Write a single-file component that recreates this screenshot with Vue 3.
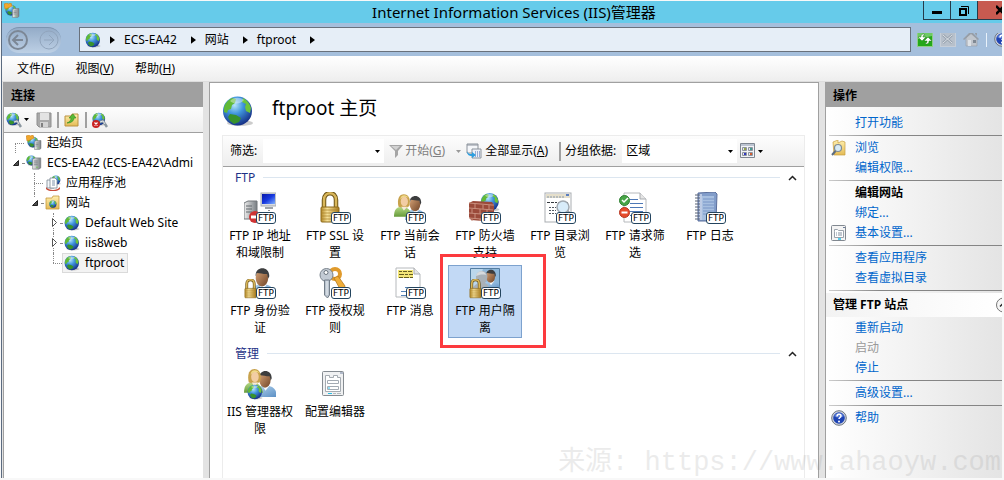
<script setup>
import { ref } from 'vue'

const crumbs = ['ECS-EA42', '网站', 'ftproot']

const menus = [
  { text: '文件', key: 'F' },
  { text: '视图', key: 'V' },
  { text: '帮助', key: 'H' }
]

const tree = [
  { label: '起始页', icon: 'start', level: 0, line: 'down', leaf: true },
  { label: 'ECS-EA42 (ECS-EA42\\Admi', icon: 'server', level: 0, state: 'open' },
  { label: '应用程序池', icon: 'pool', level: 1, line: 'full', leaf: true },
  { label: '网站', icon: 'sites', level: 1, line: 'up', state: 'open' },
  { label: 'Default Web Site', icon: 'globe', level: 2, line: 'full', state: 'closed' },
  { label: 'iis8web', icon: 'globe', level: 2, line: 'full', state: 'closed' },
  { label: 'ftproot', icon: 'globe', level: 2, line: 'up', leaf: true }
]

const groups = [
  {
    title: 'FTP',
    items: [
      { label: 'FTP IP 地址和域限制', icon: 'ip', ftp: true },
      { label: 'FTP SSL 设置', icon: 'lock', ftp: true },
      { label: 'FTP 当前会话', icon: 'users', ftp: true },
      { label: 'FTP 防火墙支持', icon: 'firewall', ftp: true },
      { label: 'FTP 目录浏览', icon: 'browse', ftp: true },
      { label: 'FTP 请求筛选', icon: 'request', ftp: true },
      { label: 'FTP 日志', icon: 'log', ftp: true },
      { label: 'FTP 身份验证', icon: 'auth', ftp: true },
      { label: 'FTP 授权规则', icon: 'keys', ftp: true },
      { label: 'FTP 消息', icon: 'message', ftp: true },
      { label: 'FTP 用户隔离', icon: 'isolation', ftp: true, marked: true }
    ]
  },
  {
    title: '管理',
    items: [
      { label: 'IIS 管理器权限', icon: 'perms' },
      { label: '配置编辑器', icon: 'config' }
    ]
  }
]

const siteActions = [
  [{ label: '打开功能' }],
  [{ label: '浏览', icon: 'explore' }, { label: '编辑权限...' }],
  [{ label: '编辑网站', title: true }, { label: '绑定...' }, { label: '基本设置...', icon: 'settings' }],
  [{ label: '查看应用程序' }, { label: '查看虚拟目录' }]
]

const ftpActions = [
  [{ label: '重新启动' }, { label: '启动', disabled: true }, { label: '停止' }],
  [{ label: '高级设置...' }],
  [{ label: '帮助', icon: 'help' }]
]

const selectedNode = ref('ftproot')
const selectedFeature = ref('FTP 用户隔离')
const filter = ref('')
const groupBy = ref('区域')
</script>

<template>
  <div class="page">
    <svg class="defs" aria-hidden="true">
      <defs>
        <radialGradient id="g-sea" cx=".4" cy=".3" r=".75">
          <stop offset="0" stop-color="#b5e4fa" />
          <stop offset=".4" stop-color="#4095dc" />
          <stop offset="1" stop-color="#12267e" />
        </radialGradient>
        <linearGradient id="g-gold" x1="0" x2="1" y1="0" y2="0">
          <stop offset="0" stop-color="#b58a28" />
          <stop offset=".35" stop-color="#f7e29a" />
          <stop offset="1" stop-color="#a87a1c" />
        </linearGradient>
        <linearGradient id="g-steel" x1="0" x2="1" y1="0" y2="0">
          <stop offset="0" stop-color="#eeeeee" />
          <stop offset="1" stop-color="#777d82" />
        </linearGradient>
        <linearGradient id="g-screen" x1="0" x2="1" y1="0" y2="1">
          <stop offset="0" stop-color="#0717a8" />
          <stop offset=".5" stop-color="#1739df" />
          <stop offset="1" stop-color="#7fb2ff" />
        </linearGradient>
        <linearGradient id="g-blue" x1="0" x2="1" y1="0" y2="1">
          <stop offset="0" stop-color="#b9d8f1" />
          <stop offset="1" stop-color="#5b8fc4" />
        </linearGradient>
        <linearGradient id="g-green" x1="0" x2="0" y1="0" y2="1">
          <stop offset="0" stop-color="#b6da87" />
          <stop offset="1" stop-color="#669b3a" />
        </linearGradient>
        <linearGradient id="g-face" x1="0" x2="1" y1="0" y2="1">
          <stop offset="0" stop-color="#d9a578" />
          <stop offset="1" stop-color="#704528" />
        </linearGradient>
        <linearGradient id="g-folder" x1="0" x2="0" y1="0" y2="1">
          <stop offset="0" stop-color="#fff0b0" />
          <stop offset="1" stop-color="#e4bb55" />
        </linearGradient>
      </defs>

      <symbol id="i-globe" viewBox="0 0 32 32">
        <ellipse cx="18" cy="28" rx="13" ry="3" fill="#000" opacity=".2" />
        <circle cx="15.500" cy="16" r="14.500" fill="url(#g-sea)" />
        <path d="M2 13c1-5 4-8 8-10l4 1-1 4-3 2-1 4-3 1-1 3-3-1z" fill="#61b936" />
        <path d="M21 3c4 2 7 6 8 10l-1 5-4-2-1-4 1-3-4-2z" fill="#6cc43a" />
        <path d="M8 19l6 1 5 3-2 4-5 2-4-3-2-4z" fill="#38922c" />
        <path d="M8 6c4-4 10-4 14-1-3 4-9 5-14 1z" fill="#fff" opacity=".4" />
      </symbol>
      <symbol id="i-tower" viewBox="0 0 16 20">
        <path d="M1 3l4-2h9v16l-3 2H1z" fill="url(#g-steel)" stroke="#72777b" />
        <path d="M3 6h6M3 9h6M3 12h6" stroke="#62686d" />
        <rect x="7" y="15" width="2" height="2" fill="#64c247" />
      </symbol>
      <symbol id="i-server" viewBox="0 0 16 16">
        <use href="#i-globe" x="0" y="0" width="11" height="11" />
        <use href="#i-tower" x="6" y="1" width="10" height="15" />
      </symbol>
      <symbol id="i-start" viewBox="0 0 16 16">
        <use href="#i-globe" x="1" y="1" width="12" height="12" />
        <path d="M0 1l3-1 1 1 3-1 1 3-4 2-3 1z" fill="#f0a72d" stroke="#c97b13" stroke-width=".5" />
        <use href="#i-tower" x="8" y="4" width="8" height="12" />
      </symbol>
      <symbol id="i-pool" viewBox="0 0 16 16">
        <use href="#i-globe" x="6" y="0" width="10" height="10" />
        <path d="M1 12c3 4 11 4 14 0v2c-3 3-11 3-14 0z" fill="#c94a38" />
        <path d="M2 5h7v8H2z" fill="#f5f8fb" stroke="#7a8793" stroke-width=".8" />
        <path d="M5 3h5l2 2v8H5z" fill="#fff" stroke="#7a8793" stroke-width=".8" />
        <path d="M7 6h3M7 8h3M7 10h3" stroke="#7e92a8" />
      </symbol>
      <symbol id="i-sites" viewBox="0 0 16 16">
        <path d="M1 3h6l1-2h6v13H1z" fill="url(#g-folder)" stroke="#c69b3e" stroke-width=".8" />
        <use href="#i-globe" x="4" y="5" width="8" height="8" />
      </symbol>
      <symbol id="i-connect" viewBox="0 0 16 16">
        <use href="#i-globe" x="0" y="0" width="14" height="14" />
        <path d="M8 10l3-1 2 3 2 3" fill="none" stroke="#8a969f" stroke-width="2.500" />
        <path d="M8 10l3-1 2 3" fill="none" stroke="#dce3e8" />
      </symbol>
      <symbol id="i-disconnect" viewBox="0 0 16 16">
        <use href="#i-connect" width="16" height="16" />
        <circle cx="4" cy="12" r="4" fill="#c92222" />
        <path d="M2.500 10.500l3 3m0-3l-3 3" stroke="#fff" stroke-width="1.200" />
      </symbol>
      <symbol id="i-save" viewBox="0 0 16 16">
        <path d="M1 1h14v14H3l-2-2z" fill="#a9a9a9" stroke="#8f8f8f" />
        <rect x="4" y="1" width="9" height="7" fill="#e3e3e3" />
        <rect x="4" y="10" width="8" height="5" fill="#d3d3d3" />
        <rect x="5" y="11" width="2" height="4" fill="#808080" />
      </symbol>
      <symbol id="i-up" viewBox="0 0 16 16">
        <path d="M1 4h6l1-2h6v12H1z" fill="url(#g-folder)" stroke="#bb9240" />
        <path d="M3 11c3-1 4-3 4-5H5l4-4 3 4h-2c0 3-3 5-7 5z" fill="#58b935" stroke="#2d8a20" stroke-width=".6" />
      </symbol>
      <symbol id="i-funnel" viewBox="0 0 16 16">
        <path d="M1 2h14l-5 6v4l-3 3V8z" fill="#a5a5a5" />
        <path d="M3 3h9L8 7z" fill="#d2d2d2" />
      </symbol>
      <symbol id="i-showall" viewBox="0 0 16 16">
        <path d="M1 1h11v9H1z" fill="#f5f7fa" stroke="#8b929b" />
        <path d="M1 2h11" stroke="#8b929b" />
        <path d="M6 6h9v9H6z" fill="#edf1f8" stroke="#8b929b" />
        <path d="M9 9h5M9 11h5M9 13h5" stroke="#4a67ad" stroke-dasharray="1 1" />
        <path d="M1 8c1 3 3 3 5 3V9l4 3-4 3v-2c-3 0-5-1-5-5z" fill="#2d9fe0" />
      </symbol>
      <symbol id="i-view" viewBox="0 0 16 16">
        <path d="M.5.5h14v14H.5z" fill="#f2f4f8" stroke="#7f8691" />
        <path d="M1 2h13" stroke="#8794ab" />
        <path d="M2.500 4.500h4v3h-4zM8.500 4.500h4v3h-4zM2.500 9.500h4v3h-4zM8.500 9.500h4v3h-4z" fill="#e4e7ec" stroke="#8d939c" />
        <path d="M4 5h2v2H4z" fill="#93a24b" /><path d="M10 5h2v2h-2z" fill="#45998f" />
        <path d="M4 10h2v2H4z" fill="#3038c0" /><path d="M10 10h2v2h-2z" fill="#d05e34" />
      </symbol>
      <symbol id="i-refresh" viewBox="0 0 16 16">
        <rect x=".5" y=".5" width="15" height="15" fill="#24a81a" stroke="#8fce85" />
        <path d="M1 1h14v4L1 8z" fill="#8fd886" opacity=".7" />
        <path d="M7 3C4 3 4 5 4 6H1l4 4 4-4H6c0-1 0-2 2-2zM9 13c3 0 3-2 3-3h3l-4-4-4 4h3c0 1 0 2-2 2z" fill="#fff" stroke="#247a1c" stroke-width=".5" />
      </symbol>
      <symbol id="i-stop" viewBox="0 0 16 16">
        <rect x=".5" y=".5" width="15" height="15" fill="#b7c0cb" stroke="#c6ced8" />
        <path d="M3 4l9 8M12 4l-9 8" stroke="#98a3b0" stroke-width="2.500" />
        <path d="M3 4l9 8M12 4l-9 8" stroke="#dce1e6" />
      </symbol>
      <symbol id="i-home" viewBox="0 0 16 16">
        <path d="M3 7v8h11V7L8 2z" fill="#c0c5cc" stroke="#939ba5" stroke-width=".6" />
        <path d="M0 8l8-8 8 8-1 1-7-6-7 6z" fill="#979ea7" />
        <path d="M12 1h2v4l-2-2z" fill="#979ea7" />
        <rect x="5" y="9" width="3" height="6" fill="#dde1e6" /><rect x="10" y="9" width="3" height="3" fill="#808994" />
      </symbol>
      <symbol id="i-help" viewBox="0 0 16 16">
        <circle cx="8" cy="8" r="7.300" fill="#d5d8de" stroke="#6c7480" />
        <circle cx="8" cy="8" r="5.800" fill="#1f44b4" />
        <path d="M3 6c2-4 8-4 10 0-3 2-7 2-10 0z" fill="#7e9fea" opacity=".6" />
        <path d="M6 6.500c0-3 4-3 4-.5 0 1.500-2 1.500-2 3" fill="none" stroke="#fff" stroke-width="1.500" />
        <circle cx="8" cy="11.500" r="1" fill="#fff" />
      </symbol>
      <symbol id="i-explore" viewBox="0 0 16 16">
        <path d="M2 2l5-2v3l4-2 3 1v13H3z" fill="url(#g-folder)" stroke="#c79e40" stroke-width=".7" />
        <circle cx="7" cy="8" r="3.500" fill="#d7ebf7" stroke="#7f8b96" stroke-width="1.200" />
        <path d="M4.500 11L1 15" stroke="#5b6c82" stroke-width="2" />
      </symbol>
      <symbol id="i-settings" viewBox="0 0 16 16">
        <rect x=".5" y=".5" width="14" height="15" rx="1" fill="#f4f4f4" stroke="#818890" />
        <path d="M12 2.500h2" stroke="#6f7d9a" />
        <path d="M3.500 6.500v-2h3l1 1h5v7h-9z" fill="#fff" stroke="#9aa2ab" />
        <path d="M5 8h1m1 0h4M5 10h1m1 0h4" stroke="#8390a0" />
        <path d="M7 14h3" stroke="#20bfe8" stroke-width="1.500" />
      </symbol>

      <symbol id="i-padlock" viewBox="0 0 20 32">
        <path d="M4 17V8c0-9 12-9 12 0v9" fill="none" stroke="#6d5417" stroke-width="4.500" />
        <path d="M4 17V8c0-9 12-9 12 0v9" fill="none" stroke="#d9b75b" stroke-width="2.500" />
        <rect x="1" y="15" width="18" height="15" rx="1" fill="url(#g-gold)" stroke="#8d6a1b" />
        <path d="M2 18h16M2 21h16M2 24h16M2 27h16" stroke="#a77f27" opacity=".7" />
      </symbol>
      <symbol id="i-woman" viewBox="0 0 20 26">
        <path d="M0 26c0-8 3-11 9-11s10 4 11 11z" fill="url(#g-green)" />
        <path d="M5 15C3 6 6 1 11 1s8 5 6 13l-4 3z" fill="#c8a24c" />
        <ellipse cx="11.500" cy="9" rx="4" ry="5.500" fill="#f2cda4" />
        <path d="M8 15l3 4 4-4z" fill="#f6e9db" />
        <path d="M7 7c2-3 5-4 9-2-2-4-9-4-9 2z" fill="#f0da8b" />
      </symbol>
      <symbol id="i-man" viewBox="0 0 22 26">
        <path d="M0 26c0-8 4-11 11-11s11 4 11 11z" fill="url(#g-blue)" />
        <path d="M8 15l3 5 4-5z" fill="#f7fafc" />
        <ellipse cx="10.500" cy="9.500" rx="5.500" ry="7.500" fill="url(#g-face)" />
        <path d="M5 8c-1-9 12-10 12 0l-1 2-1-4c-4 0-6-1-9-1z" fill="#3c3d3e" />
      </symbol>

      <symbol id="i-ip" viewBox="0 0 32 32">
        <use href="#i-tower" x="-1" y="7" width="16" height="22" />
        <rect x="17" y="1" width="15" height="13" fill="#d9dce0" stroke="#a6abb1" />
        <rect x="18" y="2" width="13" height="10" fill="url(#g-screen)" />
        <path d="M21 16h8" stroke="#9da3a9" stroke-width="2" />
        <path d="M25 18v4" stroke="#222" stroke-dasharray="1 1" />
        <circle cx="11" cy="25" r="6" fill="#cf3434" /><path d="M7 25h8" stroke="#fff" stroke-width="3" />
      </symbol>
      <symbol id="i-lock" viewBox="0 0 32 32">
        <use href="#i-padlock" x="1" y="0" width="20" height="32" />
      </symbol>
      <symbol id="i-users" viewBox="0 0 32 32">
        <use href="#i-man" x="11" y="3" width="21" height="25" />
        <use href="#i-woman" x="0" y="1" width="18" height="24" />
      </symbol>
      <symbol id="i-firewall" viewBox="0 0 32 32">
        <use href="#i-globe" x="11" y="0" width="20" height="20" />
        <path d="M0 11l4-2 19 1 2 3v17l-23-2-2-3z" fill="#9b4a3a" />
        <path d="M0 11l23 2h2M0 16l24 2M0 21l24 2M0 26l24 2" stroke="#c98f7e" fill="none" />
        <path d="M6 12v4m8-3v4m6-4v5M3 17v4m8-4v5m7-4v5M6 22v4m8-4v5M3 27v2m8-2v2" stroke="#c98f7e" />
      </symbol>
      <symbol id="i-browse" viewBox="0 0 32 32">
        <rect x="1" y="1" width="26" height="29" fill="#fff" stroke="#a9adb1" />
        <rect x="2" y="2" width="24" height="4" fill="#e5dfcb" />
        <path d="M3 5h17" stroke="#8798ad" stroke-dasharray="2 1" />
        <rect x="22" y="2" width="3" height="2" fill="#5b7ec0" />
        <path d="M3 10.500h10M14 10.500h10" stroke="#33383d" stroke-dasharray="3 1" />
        <path d="M5 15.500h7M5 18.500h7M5 21.500h7" stroke="#535c65" stroke-dasharray="2 1" />
        <path d="M23 19l5 5" stroke="#9ba2a9" stroke-width="3" />
        <circle cx="19" cy="15" r="6" fill="#d8ecfa" stroke="#a1a9b1" stroke-width="1.500" />
      </symbol>
      <symbol id="i-request" viewBox="0 0 32 32">
        <path d="M5 1h16l6 6v23H5z" fill="#fff" stroke="#b6b9bc" />
        <path d="M21 1v6h6" fill="#e5e5e5" stroke="#a9acb0" />
        <path d="M11 7.500h8M11 11.500h13M11 15.500h13M11 19.500h13M11 23.500h10" stroke="#4e78b6" />
        <circle cx="5.500" cy="8.500" r="5" fill="#47a547" stroke="#2e7f31" /><path d="M3 8l2 2 4-4" fill="none" stroke="#fff" stroke-width="1.500" />
        <circle cx="5.500" cy="20.500" r="5" fill="#e64b2b" stroke="#b43520" /><path d="M2.500 20.500h6" stroke="#fff" stroke-width="2" />
      </symbol>
      <symbol id="i-log" viewBox="0 0 32 32">
        <path d="M4 1l17-1 2 2-1 27H4z" fill="#829dca" stroke="#5b6f9c" />
        <path d="M5 2h3v26H5z" fill="#bdcbe5" /><path d="M8 4h12v24H8z" fill="#a7bfe0" />
        <path d="M9 7h11M9 10h11M9 13h11M9 16h11M9 19h11M9 22h11" stroke="#7895c6" />
        <path d="M1 3h5M1 6h5M1 9h5M1 12h5M1 15h5M1 18h5M1 21h5M1 24h5M1 27h5" stroke="#596375" />
      </symbol>
      <symbol id="i-auth" viewBox="0 0 32 32">
        <use href="#i-man" x="6" y="0" width="25" height="30" />
        <use href="#i-padlock" x="0" y="12" width="13" height="20" />
      </symbol>
      <symbol id="i-keys" viewBox="0 0 32 32">
        <circle cx="16" cy="7" r="5" fill="none" stroke="#e09a2b" stroke-width="4" />
        <path d="M15 11l4-2 7 10-1 4-4-1z" fill="#f0ae3a" stroke="#b6781d" stroke-width=".8" />
        <circle cx="7.500" cy="8" r="6.500" fill="#c3cbd4" stroke="#7a838d" /><circle cx="7" cy="5.500" r="2" fill="#fff" stroke="#6b747e" />
        <path d="M5.500 13h5v15l-2 3-3-3z" fill="#b9c3ce" stroke="#727d88" /><path d="M8 14v14" stroke="#edf2f6" />
      </symbol>
      <symbol id="i-message" viewBox="0 0 32 32">
        <path d="M2 1h18l6 6v23H2z" fill="#fff" stroke="#b6b9bc" />
        <path d="M20 1v6h6" fill="#e5e5e5" stroke="#a9acb0" />
        <path d="M4 3h15v8H4z" fill="#f4e677" />
        <path d="M5 4.500h3m1 0h4m1 0h4M5 7.500h5m1 0h3m1 0h4M5 10.500h4m1 0h5m1 0h3" stroke="#665e21" />
        <path d="M11 20.500h6M7 24.500h7M7 28.500h6" stroke="#5483b7" />
      </symbol>
      <symbol id="i-isolation" viewBox="0 0 32 32">
        <path d="M1.500 1.500h29v22h-29z" fill="#8db7da" stroke="#547da0" />
        <path d="M2 2h12L6 23H2z" fill="#cfe4f4" opacity=".7" />
        <use href="#i-man" x="13" y="2" width="18" height="21" />
        <path d="M4 23c0-5 3-5 5-7-5-7 0-13 5-12 6 1 5 8 2 12 3 1 4 3 4 7z" fill="#a9b1b8" />
        <path d="M7 9c1-6 9-6 10-1-4-1-7 0-10 1z" fill="#d6dade" />
        <use href="#i-padlock" x="0" y="12" width="13" height="20" />
      </symbol>
      <symbol id="i-perms" viewBox="0 0 32 32">
        <use href="#i-man" x="10" y="2" width="23" height="27" />
        <use href="#i-woman" x="0" y="0" width="19" height="25" />
        <use href="#i-globe" x="3" y="16" width="16" height="16" />
      </symbol>
      <symbol id="i-config" viewBox="0 0 32 32">
        <rect x="3.500" y="3.500" width="21" height="24" rx="1" fill="#f0f1f2" stroke="#858b91" />
        <path d="M21 5h3" stroke="#7181a1" />
        <path d="M6.500 23.500v-16h4v2h4v-2h4v2h3v14z" fill="#fff" stroke="#a5abb1" />
        <path d="M8.500 12.500h11v3h-11zM8.500 18.500h11v3h-11z" fill="#fff" stroke="#a4abb3" />
        <path d="M9 20h2M9 25.500h4" stroke="#27bde5" /><path d="M14 25.500h3m1 0h4" stroke="#b4b9be" />
      </symbol>
      <symbol id="i-arrow" viewBox="0 0 5 3"><path d="M0 0h5L2.500 3z" /></symbol>
    </svg>

    <div class="window">
      <header class="titlebar">
        <svg class="ico"><use href="#i-start" /></svg>
        <span class="title">Internet Information Services (IIS)管理器</span>
        <div class="sysbuttons">
          <button class="min" aria-label="最小化"><svg width="10" height="10"><path d="M0 6h10v3H0z" /></svg></button>
          <button class="max" aria-label="还原"><svg width="11" height="11"><path d="M1 4h6v6H1z" fill="none" stroke="#000" stroke-width="2" /><path d="M2 1.500h7.500V9" fill="none" stroke="#000" /></svg></button>
          <button class="close" aria-label="关闭"><svg width="6" height="10"><path d="M0 1l8 8M8 1L0 9" stroke="#000" stroke-width="2.500" /></svg></button>
        </div>
      </header>

      <nav class="navbar">
        <div class="history">
          <button aria-label="后退"><svg viewBox="0 0 20 20"><circle cx="10" cy="10" r="9" /><path d="M15 10H6m4-5l-5 5 5 5" /></svg></button>
          <button aria-label="前进" disabled><svg viewBox="0 0 20 20"><circle cx="10" cy="10" r="9" /><path d="M5 10h9m-4-5l5 5-5 5" /></svg></button>
        </div>
        <div class="address">
          <svg class="ico"><use href="#i-globe" /></svg>
          <svg class="chev" viewBox="0 0 4 6"><path d="M0 0v6l4-3z" /></svg>
          <template v-for="crumb in crumbs" :key="crumb">
            <a href="#">{{ crumb }}</a>
            <svg class="chev" viewBox="0 0 4 6"><path d="M0 0v6l4-3z" /></svg>
          </template>
        </div>
        <div class="navtools">
          <button aria-label="刷新"><svg class="ico"><use href="#i-refresh" /></svg></button>
          <button aria-label="停止"><svg class="ico"><use href="#i-stop" /></svg></button>
          <button aria-label="主页"><svg class="ico"><use href="#i-home" /></svg></button>
          <i class="divider"></i>
          <button class="nav-help" aria-label="帮助"><svg class="ico"><use href="#i-help" /></svg></button>
        </div>
      </nav>

      <div class="menubar">
        <button v-for="menu in menus" :key="menu.key">{{ menu.text }}(<u>{{ menu.key }}</u>)</button>
      </div>

      <div class="panes">
        <aside class="connections">
          <h2>连接</h2>
          <div class="toolbar">
            <button class="drop" aria-label="连接"><svg class="ico"><use href="#i-connect" /></svg><svg class="arrow"><use href="#i-arrow" /></svg></button>
            <button aria-label="保存" disabled><svg class="ico"><use href="#i-save" /></svg></button>
            <i class="sep"></i>
            <button aria-label="向上"><svg class="ico"><use href="#i-up" /></svg></button>
            <i class="sep"></i>
            <button aria-label="断开"><svg class="ico"><use href="#i-disconnect" /></svg></button>
          </div>
          <ul class="tree">
            <li v-for="node in tree" :key="node.label" :class="'level-' + node.level">
              <span class="slot" :class="[node.line, { leaf: node.leaf }]">
                <svg v-if="node.state === 'open'" viewBox="0 0 8 9"><path d="M6.500 2.500v5h-5z" fill="#505050" stroke="#222" /></svg>
                <svg v-if="node.state === 'closed'" viewBox="0 0 8 9"><path d="M2.500.5v8l4-4z" fill="#fff" stroke="#555" /></svg>
              </span>
              <button class="node" :class="{ selected: selectedNode === node.label }" @click="selectedNode = node.label">
                <svg class="ico"><use :href="'#i-' + node.icon" /></svg>{{ node.label }}
              </button>
            </li>
          </ul>
        </aside>

        <main class="content">
          <div class="heading">
            <svg><use href="#i-globe" /></svg>
            <h1>ftproot 主页</h1>
          </div>
          <div class="features">
            <div class="filterbar">
              <label for="filter">筛选:</label>
              <div class="combo filter">
                <input id="filter" v-model="filter" type="text">
                <svg class="arrow"><use href="#i-arrow" /></svg>
              </div>
              <button class="go" disabled><svg class="ico"><use href="#i-funnel" /></svg><span>开始(<u>G</u>)</span><svg class="arrow"><use href="#i-arrow" /></svg></button>
              <button class="all"><svg class="ico"><use href="#i-showall" /></svg><span>全部显示(<u>A</u>)</span></button>
              <i class="sep"></i>
              <label for="group">分组依据:</label>
              <div class="combo group-by">
                <select id="group" v-model="groupBy">
                  <option>区域</option>
                  <option>类别</option>
                </select>
                <svg class="arrow"><use href="#i-arrow" /></svg>
              </div>
              <button class="view" aria-label="视图"><svg class="ico"><use href="#i-view" /></svg><svg class="arrow"><use href="#i-arrow" /></svg></button>
            </div>

            <section v-for="group in groups" :key="group.title" class="group">
              <h3>
                <span>{{ group.title }}</span>
                <button aria-label="折叠"><svg viewBox="0 0 9 6"><path d="M1 5l3.500-3.500L8 5" fill="none" stroke="#222" stroke-width="1.500" /></svg></button>
              </h3>
              <div class="items">
                <button
                  v-for="item in group.items"
                  :key="item.label"
                  class="item"
                  :class="{ selected: selectedFeature === item.label, marked: item.marked }"
                  @click="selectedFeature = item.label"
                >
                  <span class="picture">
                    <svg><use :href="'#i-' + item.icon" /></svg>
                    <b v-if="item.ftp">FTP</b>
                  </span>
                  <span class="name">{{ item.label }}</span>
                </button>
              </div>
            </section>
          </div>
        </main>

        <aside class="actions">
          <h2>操作</h2>
          <div class="links first">
            <ul v-for="(block, i) in siteActions" :key="i">
              <li v-for="action in block" :key="action.label">
                <svg v-if="action.icon" class="ico"><use :href="'#i-' + action.icon" /></svg>
                <strong v-if="action.title">{{ action.label }}</strong>
                <a v-else href="#">{{ action.label }}</a>
              </li>
            </ul>
          </div>
          <div class="subhead">
            管理 FTP 站点
            <button aria-label="折叠"><svg width="6" height="16"><circle cx="7.500" cy="8" r="7" fill="#f6f6f6" stroke="#777" /><path d="M4 9.500l3-3" stroke="#222" stroke-width="1.500" /></svg></button>
          </div>
          <div class="links">
            <ul v-for="(block, i) in ftpActions" :key="i">
              <li v-for="action in block" :key="action.label">
                <svg v-if="action.icon" class="ico"><use :href="'#i-' + action.icon" /></svg>
                <span v-if="action.disabled">{{ action.label }}</span>
                <a v-else href="#">{{ action.label }}</a>
              </li>
            </ul>
          </div>
        </aside>
      </div>
    </div>
    <div class="watermark">来源: https://www.ahaoyw.com</div>
  </div>
</template>

<style>
body {
  background: #f8f8f8;
}
</style>

<style scoped>
* {
  box-sizing: border-box;
  margin: 0;
}

.page {
  position: relative;
  display: flex;
  min-height: 100vh;
  padding: 1px 2px 2px 1px;
  overflow: hidden;
  font: 12px/20px "Noto Sans", "Noto Sans CJK SC", sans-serif;
  color: #000;
}

.defs {
  position: absolute;
  width: 0;
  height: 0;
}

button {
  display: flex;
  align-items: center;
  padding: 0;
  border: 0;
  background: none;
  color: inherit;
  font: inherit;
}

ul {
  padding: 0;
  list-style: none;
}

a {
  color: inherit;
  text-decoration: none;
}

svg {
  flex: none;
}

.ico {
  width: 16px;
  height: 16px;
}

.arrow {
  width: 5px;
  height: 3px;
}

.window {
  display: flex;
  flex: 1;
  flex-direction: column;
  min-width: 0;
  border-left: 1px solid #5b6b80;
}

.titlebar {
  display: grid;
  grid-template-columns: 101px 1fr 79px;
  height: 22px;
  padding-left: 2px;
  background: #66cbea;
}

.titlebar .ico {
  margin-top: 2px;
}

.title {
  font-size: 15px;
  line-height: 22px;
  text-align: center;
  white-space: nowrap;
}

.sysbuttons {
  display: flex;
}

.sysbuttons button {
  justify-content: center;
  width: 27px;
  height: 19px;
  border: 1px solid #253b4a;
  border-top: 0;
  border-right: 0;
}

.sysbuttons .close {
  justify-content: flex-end;
  width: 25px;
  background: #c75a50;
}

.navbar {
  display: flex;
  align-items: center;
  height: 33px;
  padding-left: 4px;
  background: #a5bfdc;
}

.history {
  display: flex;
  justify-content: space-between;
  width: 55px;
  height: 26px;
  padding: 3px 2px;
  border-radius: 13px;
  border-top: 1px solid #7c94af;
  background: linear-gradient(#94acc8, #bdd0e5);
}

.history svg {
  width: 20px;
  height: 20px;
  fill: none;
  stroke: #7c8795;
  stroke-width: 2;
}

.history button:disabled svg {
  stroke: #91a5bd;
  stroke-width: 1;
}

.address {
  display: flex;
  flex: 1;
  align-items: center;
  gap: 9px;
  height: 25px;
  margin-left: 18px;
  padding-left: 5px;
  border: 1px solid #69717c;
  background: #e6eef7;
}

.address a {
  margin-right: 5px;
}

.chev {
  width: 5px;
  height: 8px;
}

.navtools {
  display: flex;
  align-items: center;
  gap: 7px;
  width: 91px;
  padding-left: 6px;
  overflow: hidden;
}

.navtools button {
  margin-top: -2px;
}

.navtools .divider {
  flex: none;
  width: 1px;
  height: 14px;
  background: #e8f1fa;
}

.nav-help {
  width: 8px;
}

.menubar {
  display: flex;
  gap: 21px;
  height: 26px;
  padding-left: 15px;
  border-bottom: 1px solid #ddd;
  background: linear-gradient(#fff, #eee);
}

.panes {
  display: flex;
  flex: 1;
  gap: 6px;
  padding-left: 1px;
  background: #e3e3e3;
}

h2 {
  height: 25px;
  padding-left: 7px;
  background: #a0a0a0;
  font-size: 12px;
  line-height: 27px;
}

.connections {
  flex: none;
  width: 200px;
  overflow: hidden;
  border-left: 1px solid #a0a0a0;
  background: #fff;
}

.toolbar {
  display: flex;
  align-items: center;
  gap: 5px;
  height: 26px;
  padding-left: 2px;
  border-bottom: 1px solid #a0a0a0;
  background: linear-gradient(#fdfdfd, #eee);
}

.toolbar .drop {
  gap: 2px;
  width: 25px;
}

.sep {
  flex: none;
  width: 2px;
  height: 16px;
  background: #a0a0a0;
}

.tree li {
  display: flex;
  height: 20px;
  padding-left: 8px;
}

.tree .level-1 {
  padding-left: 27px;
}

.tree .level-2 {
  padding-left: 46px;
}

.slot {
  position: relative;
  flex: none;
  width: 12px;
}

.slot svg {
  position: absolute;
  top: 5px;
  left: 0;
  width: 8px;
  height: 9px;
  background: #fff;
}

.slot::before {
  position: absolute;
  top: 10px;
  right: 0;
  left: 10px;
  border-top: 1px dotted #888;
  content: "";
}

.slot.leaf::before {
  left: 3px;
}

.slot.down::after,
.slot.full::after,
.slot.up::after {
  position: absolute;
  top: 0;
  bottom: 0;
  left: 3px;
  z-index: -1;
  border-left: 1px dotted #888;
  content: "";
}

.slot.down::after {
  top: 10px;
}

.slot.up::after {
  bottom: 10px;
}

.connections,
.slot {
  z-index: 0;
}

.node {
  gap: 5px;
  padding: 0 3px 0 1px;
  border: 1px solid transparent;
  white-space: nowrap;
}

.node.selected {
  border-color: #dadada;
  background: #f3f3f3;
}

.content {
  display: flex;
  flex: 1;
  flex-direction: column;
  min-width: 0;
  padding: 0 13px 0 12px;
  border: 1px solid #a0a0a0;
  border-bottom: 0;
  background: #fff;
}

.heading {
  display: flex;
  gap: 18px;
  height: 52px;
  padding-top: 12px;
}

.heading svg {
  width: 32px;
  height: 32px;
}

h1 {
  font-size: 19px;
  font-weight: 400;
  line-height: 26px;
}

.features {
  flex: 1;
  border: 1px solid #ececec;
  border-bottom: 0;
}

.filterbar {
  display: flex;
  align-items: center;
  height: 31px;
  padding-left: 7px;
  border-bottom: 1px solid #a0a0a0;
  background: linear-gradient(#fdfdfd, #eee);
  white-space: nowrap;
}

.combo {
  display: flex;
  align-items: center;
  height: 24px;
  padding-right: 4px;
  background: #fff;
}

.combo.filter {
  width: 121px;
  margin-left: 6px;
}

.combo.group-by {
  width: 115px;
  margin-left: 6px;
}

.combo input,
.combo select {
  flex: 1;
  min-width: 0;
  height: 22px;
  padding: 0 4px;
  border: 0;
  outline: 0;
  background: transparent;
  font: inherit;
  appearance: none;
}

.go {
  gap: 1px;
  margin-left: 4px;
  color: #808080;
}

.go .arrow {
  margin-left: 10px;
  fill: #999;
}

.all {
  margin-left: 5px;
}

.all .ico {
  margin-right: 3px;
}

.filterbar .sep {
  height: 19px;
  margin: 0 4px 0 11px;
}

.view {
  gap: 2px;
  margin-left: 3px;
}

.group {
  padding: 1px 0 6px;
}

.group + .group {
  padding-top: 0;
}

h3 {
  display: flex;
  align-items: center;
  gap: 8px;
  height: 19px;
  margin-bottom: 3px;
  padding: 0 7px 0 12px;
  color: #1e3287;
  font-size: 12px;
  font-weight: 400;
}

h3::after {
  flex: 1;
  order: 1;
  height: 1px;
  background: #dce6f0;
  content: "";
}

h3 button {
  order: 2;
}

h3 svg {
  width: 9px;
  height: 6px;
}

.items {
  display: flex;
  flex-wrap: wrap;
  gap: 2px 1px;
}

.item {
  position: relative;
  flex-direction: column;
  gap: 3px;
  width: 74px;
  height: 73px;
  padding-top: 1px;
  border: 1px solid transparent;
  line-height: 17px;
}

.item.selected {
  border-color: #7da2ce;
  background: #c2d9f5;
}

.item.marked::after {
  position: absolute;
  top: -12px;
  right: -25px;
  bottom: -11px;
  left: -9px;
  border: 3px solid #fc3a3e;
  content: "";
  pointer-events: none;
}

.picture {
  position: relative;
  width: 32px;
  height: 32px;
}

.picture svg {
  display: block;
  width: 32px;
  height: 32px;
}

.picture b {
  position: absolute;
  right: 0;
  bottom: 0;
  width: 20px;
  height: 12px;
  border: 1px solid #23445e;
  border-radius: 3px;
  background: #fff;
  font: 9px/10px "DejaVu Sans", sans-serif;
}

.name {
  width: 68px;
}

.actions {
  flex: none;
  width: 177px;
  border-left: 1px solid #a0a0a0;
  background: linear-gradient(90deg, #fff, #e4e4e4);
}

.links.first {
  padding-top: 6px;
}

.links ul + ul::before,
.links.first ul:last-child::after {
  display: block;
  height: 1px;
  margin: 2px 0 2px 3px;
  background: linear-gradient(90deg, #ccc, #858585 30%);
  content: "";
}

.links li {
  display: flex;
  align-items: center;
  gap: 8px;
  height: 20px;
  padding-left: 5px;
  color: #999;
}

.links li > :first-child:not(svg) {
  margin-left: 24px;
}

.links a {
  color: #0066cc;
}

.links strong {
  color: #000;
}

.subhead {
  display: flex;
  align-items: center;
  justify-content: space-between;
  height: 24px;
  margin-bottom: 1px;
  padding-left: 7px;
  background: linear-gradient(90deg, #f3f3f3, #fff);
  font-weight: 700;
}

.watermark {
  position: absolute;
  right: 3px;
  bottom: 0;
  color: #808080;
  font: 27px/34px "Liberation Mono", "Noto Sans CJK SC", monospace;
  opacity: .15;
  pointer-events: none;
  white-space: nowrap;
}
</style>
